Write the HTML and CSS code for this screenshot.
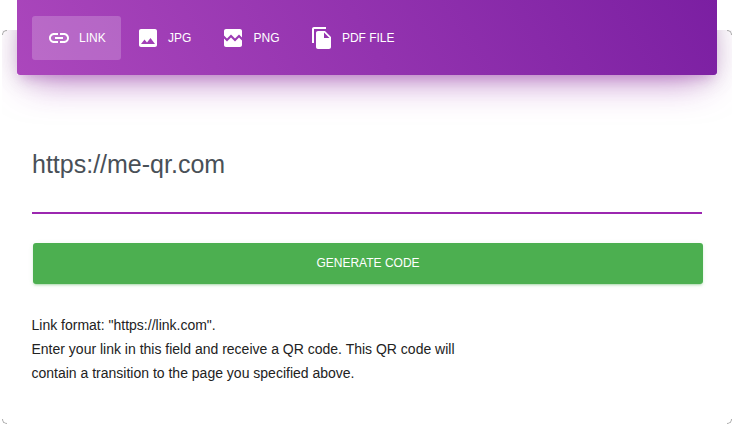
FILE: index.html
```html
<!DOCTYPE html>
<html lang="en">
<head>
<meta charset="utf-8">
<title>QR code generator</title>
<link rel="stylesheet" href="styles.css">
</head>
<body>
<div class="shell">
  <nav class="tabs">
    <a class="tab active">
      <svg class="icon" viewBox="0 0 24 24"><path d="M3.9 12c0-1.71 1.39-3.1 3.1-3.1h4V7H7c-2.76 0-5 2.24-5 5s2.24 5 5 5h4v-1.9H7c-1.71 0-3.1-1.39-3.1-3.1zM8 13h8v-2H8v2zm9-6h-4v1.9h4c1.71 0 3.1 1.39 3.1 3.1s-1.39 3.1-3.1 3.1h-4V17h4c2.76 0 5-2.24 5-5s-2.24-5-5-5z"/></svg>
      <span>LINK</span>
    </a>
    <a class="tab">
      <svg class="icon" viewBox="0 0 24 24"><path d="M21 19V5c0-1.1-.9-2-2-2H5c-1.1 0-2 .9-2 2v14c0 1.1.9 2 2 2h14c1.1 0 2-.9 2-2zM8.5 13.5l2.5 3.01L14.5 12l4.5 6H5l3.5-4.5z"/></svg>
      <span>JPG</span>
    </a>
    <a class="tab">
      <svg class="icon" viewBox="0 0 24 24"><path d="M21 5v6.59l-3-3.01-4 4.01-4-4-4 4-3-3.01V5c0-1.1.9-2 2-2h14c1.1 0 2 .9 2 2zm-3 6.42l3 3.01V19c0 1.1-.9 2-2 2H5c-1.1 0-2-.9-2-2v-6.58l3 2.99 4-4 4 4 4-3.99z"/></svg>
      <span>PNG</span>
    </a>
    <a class="tab">
      <svg class="icon" viewBox="0 0 24 24"><path d="M16 1H4c-1.1 0-2 .9-2 2v14h2V3h12V1zm-1 4l6 6v10c0 1.1-.9 2-2 2H7.99C6.89 23 6 22.1 6 21l.01-14c0-1.1.89-2 1.99-2h7zm-1 7h5.5L14 6.5V12z"/></svg>
      <span>PDF FILE</span>
    </a>
  </nav>
  <main class="card">
    <div class="tabs-shadow"></div>
    <i class="corner tl"></i><i class="corner tr"></i><i class="corner bl"></i><i class="corner br"></i>
    <input class="field" type="text" value="https://me-qr.com" aria-label="Link">
    <button class="generate" type="button">GENERATE CODE</button>
    <p class="hint">Link format: "https://link.com".<br>Enter your link in this field and receive a QR code. This QR code will<br>contain a transition to the page you specified above.</p>
  </main>
</div>
</body>
</html>
```

FILE: styles.css
```css
* { box-sizing: border-box; }
html, body { margin: 0; height: 100%; background: #fff; overflow: hidden; }
body { font-family: "Liberation Sans", Arial, sans-serif; }
.shell { width: 732px; height: 425px; display: flex; flex-direction: column; }
.tabs {
  position: relative; z-index: 2;
  height: 75px; margin: 0 15px 0 17px; padding: 16px 15px 15px;
  display: flex;
  border-radius: 0 0 3px 3px;
  background: linear-gradient(60deg, #ab47bc, #7b1fa2);
}
.tab {
  height: 44px; padding: 0 15.3px 0 14.7px; gap: 8.3px;
  display: flex; align-items: center;
  color: #fff; font-size: 12px; line-height: 1; text-transform: uppercase;
  border-radius: 3px;
}
.tab.active { background: rgba(255,255,255,.2); }
.icon { width: 24px; height: 24px; fill: #fff; flex: none; }
.card {
  position: relative; z-index: 1;
  flex: 1; margin: -45px 0 1px 2px;
  padding: 45px 30px 0 30px;
  background: #fff; overflow: hidden;
}
.tabs-shadow {
  position: absolute; left: 15px; top: -30px; width: 700px; height: 75px;
  box-shadow: 0 16px 38px -12px rgba(156,39,176,.56), 0 4px 25px 0 rgba(0,0,0,.12), 0 8px 10px -5px rgba(156,39,176,.2);
}
.corner { position: absolute; width: 5px; height: 5px; border: 0 solid #aaa; }
.tl { left: 0; top: 0; border-width: 1px 0 0 1px; border-top-left-radius: 5px; }
.tr { right: 0; top: 0; border-width: 1px 1px 0 0; border-top-right-radius: 5px; }
.bl { left: 0; bottom: 0; border-width: 0 0 1px 1px; border-bottom-left-radius: 5px; }
.br { right: 0; bottom: 0; border-width: 0 1px 1px 0; border-bottom-right-radius: 5px; }
.field {
  display: block; width: 670px; height: 94px; padding: 0 0 4px; margin: 45px 0 0;
  border: 0; border-bottom: 2px solid #9c27b0; outline: 0; background: #fff;
  color: #495057; font: 400 25px "Liberation Sans", Arial, sans-serif;
}
.generate {
  display: block; width: 670px; height: 41px; margin: 29px 0 0 1px; padding: 0 0 2px;
  border: 0; border-radius: 3px;
  background: #4caf50; color: #fff;
  font: 400 12px "Liberation Sans", Arial, sans-serif; text-transform: uppercase;
  box-shadow: 0 2px 2px 0 rgba(76,175,80,.14), 0 3px 1px -2px rgba(76,175,80,.2), 0 1px 5px 0 rgba(76,175,80,.12);
}
.hint { margin: 29px 0 0 -0.5px; color: #222; font-size: 14px; line-height: 24px; }
```
